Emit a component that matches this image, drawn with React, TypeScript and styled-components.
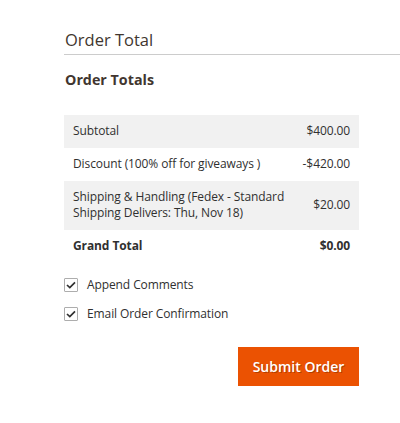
import React from "react";
import styled, { createGlobalStyle } from "styled-components";

const Global = createGlobalStyle`
  html, body { margin: 0; padding: 0; background: #fff; }
  body { font-family: "Open Sans", "Noto Sans", Arial, sans-serif; color: #303030; }
  * { box-sizing: border-box; }
`;

const Page = styled.div`
  padding: 29px 0 0 64px;
  width: 400px;
`;

const SectionTitle = styled.h2`
  margin: 0;
  font-size: 16.5px;
  font-weight: 400;
  line-height: 22px;
  color: #41362f;
  padding-bottom: 3px;
  padding-left: 1px;
  border-bottom: 1px solid #cccccc;
`;

const Body = styled.div`
  width: 295px;
  display: flex;
  flex-direction: column;
`;

const SubTitle = styled.h3`
  margin: 15px 0 0;
  padding-left: 1px;
  font-size: 14.3px;
  font-weight: 700;
  line-height: 20px;
  color: #41362f;
`;

const Table = styled.table`
  margin-top: 25px;
  width: 100%;
  border-collapse: collapse;
  font-size: 12px;
  line-height: 16px;
  letter-spacing: -0.1px;
`;

const Row = styled.tr<{ $shade?: boolean; $strong?: boolean }>`
  background: ${(p) => (p.$shade ? "#f1f1f1" : "transparent")};
  font-weight: ${(p) => (p.$strong ? 700 : 400)};
`;

const Label = styled.td`
  padding: 8px 9px 9px;
  text-align: left;
  vertical-align: middle;
`;

const Amount = styled.td`
  padding: 8px 9px 9px 0;
  text-align: right;
  vertical-align: middle;
  white-space: nowrap;
`;

const Options = styled.div`
  margin-top: 15px;
  display: flex;
  flex-direction: column;
  gap: 15px;
`;

const Option = styled.label`
  display: flex;
  align-items: center;
  gap: 9px;
  font-size: 12px;
  line-height: 14px;
  letter-spacing: -0.1px;
  color: #303030;
`;

const Box = styled.span`
  width: 14px;
  height: 14px;
  border: 1px solid #adadad;
  border-radius: 1px;
  display: flex;
  align-items: center;
  justify-content: center;
  background: #fff;
`;

const Actions = styled.div`
  margin-top: 26px;
  display: flex;
  justify-content: flex-end;
`;

const PrimaryButton = styled.button`
  width: 121px;
  height: 39px;
  background: #eb5202;
  border: 1px solid #eb5202;
  color: #fff;
  font-family: "Open Sans", "Noto Sans", Arial, sans-serif;
  font-size: 14px;
  font-weight: 600;
  text-shadow: 1px 1px 0 rgba(0, 0, 0, 0.25);
  padding: 0;
  cursor: pointer;
`;

const Check = () => (
  <Box>
    <svg width="10" height="8" viewBox="0 0 10 8">
      <polyline points="1,4 3.8,6.6 9,1.4" fill="none" stroke="#303030" strokeWidth="1.7" />
    </svg>
  </Box>
);

export default function App() {
  return (
    <Page>
      <Global />
      <SectionTitle>Order Total</SectionTitle>
      <Body>
        <SubTitle>Order Totals</SubTitle>
        <Table>
          <tbody>
            <Row $shade>
              <Label>Subtotal</Label>
              <Amount>$400.00</Amount>
            </Row>
            <Row>
              <Label>Discount (100% off for giveaways )</Label>
              <Amount>-$420.00</Amount>
            </Row>
            <Row $shade>
              <Label>Shipping &amp; Handling (Fedex - Standard Shipping Delivers: Thu, Nov 18)</Label>
              <Amount>$20.00</Amount>
            </Row>
            <Row $strong>
              <Label>Grand Total</Label>
              <Amount>$0.00</Amount>
            </Row>
          </tbody>
        </Table>
        <Options>
          <Option>
            <Check />
            Append Comments
          </Option>
          <Option>
            <Check />
            Email Order Confirmation
          </Option>
        </Options>
        <Actions>
          <PrimaryButton>Submit Order</PrimaryButton>
        </Actions>
      </Body>
    </Page>
  );
}
